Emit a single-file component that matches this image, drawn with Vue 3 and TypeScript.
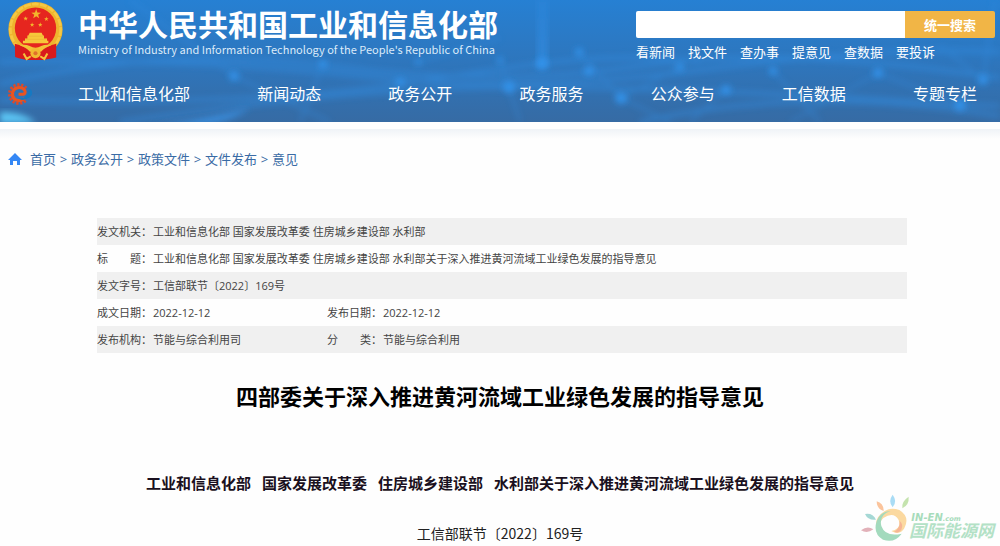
<script setup lang="ts">
interface DocRow {
  label: string
  value: string
  label2?: string
  value2?: string
}

const quickLinks: string[] = ['看新闻', '找文件', '查办事', '提意见', '查数据', '要投诉']
const navItems: string[] = ['工业和信息化部', '新闻动态', '政务公开', '政务服务', '公众参与', '工信数据', '专题专栏']
const crumbs: string[] = ['首页', '政务公开', '政策文件', '文件发布', '意见']
const issuers: string[] = [
  '工业和信息化部',
  '国家发展改革委',
  '住房城乡建设部',
  '水利部关于深入推进黄河流域工业绿色发展的指导意见',
]
const rows: DocRow[] = [
  { label: '发文机关：', value: '工业和信息化部 国家发展改革委 住房城乡建设部 水利部' },
  { label: '标　　题：', value: issuers.join(' ') },
  { label: '发文字号：', value: '工信部联节〔2022〕169号' },
  { label: '成文日期：', value: '2022-12-12', label2: '发布日期：', value2: '2022-12-12' },
  { label: '发布机构：', value: '节能与综合利用司', label2: '分　　类：', value2: '节能与综合利用' },
]

function star(cx: number, cy: number, r: number): string {
  return Array.from({ length: 10 }, (_, i) => {
    const a = (Math.PI / 5) * i - Math.PI / 2
    const d = i % 2 ? r * 0.4 : r
    return `${(cx + d * Math.cos(a)).toFixed(1)},${(cy + d * Math.sin(a)).toFixed(1)}`
  }).join(' ')
}

const stars: string[] = [star(83, 36, 15), star(52, 49, 7), star(71, 67, 7), star(95, 67, 7), star(113, 50, 7)]
const nodes: number[][] = [
  [323, 64, 4], [418, 62, 3], [500, 60, 3], [509, 87, 6], [542, 64, 6], [579, 52, 4], [589, 71, 5], [621, 98, 6],
  [680, 67, 4], [726, 90, 5], [773, 71, 4], [878, 73, 5], [960, 105, 6], [983, 80, 5], [234, 76, 5], [400, 82, 4],
]
const teeth: number[] = Array.from({ length: 12 }, (_, i) => 50 + i * 24)
</script>

<template>
  <div class="page">
    <header class="banner">
      <svg class="backdrop" viewBox="0 0 1000 122" preserveAspectRatio="none" aria-hidden="true">
        <defs>
          <filter id="soft" x="-10%" y="-30%" width="120%" height="160%"><feGaussianBlur stdDeviation="3" /></filter>
          <linearGradient id="beam" x1="0" y1="0" x2="0" y2="1">
            <stop offset="0" stop-color="#3292ec" stop-opacity=".2" />
            <stop offset="1" stop-color="#3292ec" stop-opacity=".6" />
          </linearGradient>
        </defs>
        <g filter="url(#soft)" fill="none" stroke="#3390e6" stroke-width="4" opacity=".5">
          <path d="M0 84Q160 45 330 66T640 66T1000 78" />
          <path d="M0 62Q200 58 360 76T700 70T1000 52" />
          <path d="M120 122Q350 88 510 87T1000 106" />
          <path d="M0 100Q260 108 440 78T700 62" />
          <path d="M640 122Q800 84 1000 116" />
          <path d="M130 0L234 76L330 122M323 64L300 122M418 62L500 38M500 60L509 87L520 122M579 52L621 98L670 122" stroke-width="2" />
          <path d="M680 67L620 98M726 90L690 122M773 71L820 122M878 73L960 105M983 80L940 45M983 80L995 0M878 73L790 122" stroke-width="2" />
        </g>
        <rect x="537" y="0" width="11" height="66" fill="url(#beam)" filter="url(#soft)" />
        <g filter="url(#soft)" fill="#3395ef">
          <circle v-for="(n, i) in nodes" :key="i" :cx="n[0]" :cy="n[1]" :r="n[2]" opacity=".85" />
        </g>
        <path d="M0 112Q24 112 36 123H0Z" fill="#5bc6f5" filter="url(#soft)" />
        <path d="M150 124Q210 120 250 108Q230 122 200 124Z" fill="#3b92e4" filter="url(#soft)" />
      </svg>

      <div class="brand-row">
        <svg class="emblem" viewBox="0 0 162 174" role="img" aria-label="国徽">
          <circle cx="81" cy="80" r="80" fill="#eeb52e" />
          <circle cx="81" cy="80" r="74" fill="none" stroke="#f6c843" stroke-width="8" stroke-dasharray="20 4" />
          <circle cx="81" cy="77" r="61" fill="#e6261f" />
          <polygon v-for="(s, i) in stars" :key="i" :points="s" fill="#f3b62c" />
          <path d="M64 91H99L103 99H106V108H115V114H119V122H44V114H50V108H57V99H60Z" fill="#f6c83a" />
          <path d="M60 101H103M50 110H114" stroke="#ecb235" stroke-width="2" />
          <path d="M20 123Q48 130 64 145Q81 130 98 145Q114 130 142 123V164Q115 170 103 171H59Q44 170 21 162Z" fill="#d91a1c" />
          <path d="M34 128Q50 124 64 130Q81 140 98 130Q112 124 128 128Q105 132 98 146Q81 151 64 146Q56 132 34 128Z" fill="#f4c338" />
          <circle cx="81" cy="151" r="15" fill="#f2b931" />
          <circle cx="81" cy="151" r="6" fill="#e0702a" />
          <path d="M46 152L55 168L67 160M116 152L107 168L95 160" fill="none" stroke="#f5c33c" stroke-width="6" />
        </svg>
        <div class="names">
          <div class="name-zh">中华人民共和国工业和信息化部</div>
          <div class="name-en">Ministry of Industry and Information Technology of the People's Republic of China</div>
        </div>
        <div class="search">
          <form class="search-form" @submit.prevent>
            <input type="text" class="search-input" aria-label="搜索" />
            <button type="submit" class="search-button">统一搜索</button>
          </form>
          <div class="quick">
            <a v-for="q in quickLinks" :key="q" href="#">{{ q }}</a>
          </div>
        </div>
      </div>

      <div class="nav-row">
        <svg class="e-logo" viewBox="0 0 76 66" aria-hidden="true">
          <path v-for="t in teeth" :key="t" d="M60 30h9v7h-9z" :transform="`rotate(${t} 36 33)`" fill="#dc4a2a" />
          <path d="M35 34H50Q58 30 54 22Q46 11 32 14Q17 18 17 34Q18 50 34 53Q46 53 54 46" fill="none" stroke="#ea5420" stroke-width="9" />
          <path d="M18 24Q12 38 22 48" fill="none" stroke="#ea5420" stroke-width="8" />
          <path d="M54 43Q69 34 66 15Q82 25 75 36Q66 49 46 51Q37 50 34 45Q44 47 54 43Z" fill="#1679c2" />
        </svg>
        <nav class="nav">
          <a v-for="n in navItems" :key="n" href="#">{{ n }}</a>
        </nav>
      </div>
    </header>
    <div class="shade"></div>

    <nav class="crumbs" aria-label="当前位置">
      <svg class="home" viewBox="0 0 14 13" aria-hidden="true">
        <path d="M7 0L14 7H12V12H9V8H5V12H2V7H0Z" fill="#3487f5" />
      </svg>
      <template v-for="(c, i) in crumbs" :key="c">
        <span v-if="i > 0" class="sep">&gt;</span>
        <a href="#">{{ c }}</a>
      </template>
    </nav>

    <main class="content">
      <table class="meta">
        <colgroup><col class="col-label" /><col class="col-value" /><col class="col-label" /><col /></colgroup>
        <tbody>
          <tr v-for="r in rows" :key="r.label">
            <th scope="row">{{ r.label }}</th>
            <td :colspan="r.label2 ? 1 : 3">{{ r.value }}</td>
            <template v-if="r.label2">
              <th scope="row">{{ r.label2 }}</th>
              <td>{{ r.value2 }}</td>
            </template>
          </tr>
        </tbody>
      </table>
      <h1>四部委关于深入推进黄河流域工业绿色发展的指导意见</h1>
      <h2><span v-for="s in issuers" :key="s">{{ s }}</span></h2>
      <p class="number">工信部联节〔2022〕169号</p>
    </main>

    <svg class="watermark" viewBox="0 0 411 144" role="img" aria-label="国际能源网">
      <path d="M3 109Q22 94 40 106Q22 120 3 109Z" fill="#e2b1b9" />
      <path d="M15 60Q38 56 48 77Q24 80 15 60Z" fill="#a5d8d5" />
      <path d="M50 22Q71 28 71 51Q50 45 50 22Z" fill="#fbc49c" />
      <path d="M98 2Q113 22 98 40Q83 22 98 2Z" fill="#a9dcf5" />
      <path d="M146 8Q148 33 127 43Q124 22 146 8Z" fill="#c4e3ae" />
      <path d="M54 70Q80 34 118 48Q151 68 133 103Q119 126 94 111Q125 106 116 78Q101 51 70 72Q53 88 60 112Q40 92 54 70Z" fill="#fbd9a0" />
      <path d="M102 113Q121 104 119 81Q131 91 124 107Q115 120 102 113Z" fill="#f6b595" />
      <path d="M92 51Q56 62 64 96Q76 130 125 119Q103 149 69 137Q38 119 50 82Q61 52 92 51Z" fill="#a3dabd" />
      <text x="154" y="82" class="wm-en">IN-EN<tspan class="wm-com">.com</tspan></text>
      <text x="147" y="130" class="wm-zh">国际能源网</text>
    </svg>
  </div>
</template>

<style>
body {
  margin: 0;
  background: #fefefe;
}
</style>

<style scoped>
.page {
  position: relative;
  min-height: 100vh;
  overflow: hidden;
  font-family: "Open Sans", "Noto Sans CJK SC", sans-serif;
}
a {
  color: inherit;
  text-decoration: none;
  white-space: nowrap;
}
.banner {
  position: relative;
  background: linear-gradient(#2680d3, #2e76bd 50%, #366ba4);
  color: #fff;
}
.backdrop {
  position: absolute;
  inset: 0;
  width: 100%;
  height: 100%;
}
.brand-row {
  position: relative;
  display: flex;
  align-items: flex-start;
  padding: 2px 5px 1px 8px;
}
.emblem {
  flex: none;
  width: 55px;
  height: 59px;
}
.names {
  flex: 1;
  margin-left: 15px;
  padding-top: 3px;
  white-space: nowrap;
  font-family: "Noto Sans CJK SC", sans-serif;
}
.name-zh {
  font-size: 30px;
  line-height: 36px;
  font-weight: 700;
}
.name-en {
  font-size: 11px;
  line-height: 16px;
  color: #dcebfa;
}
.search {
  width: 359px;
  padding-top: 9px;
}
.search-form {
  display: flex;
  height: 27px;
}
.search-input {
  flex: 1;
  min-width: 0;
  padding: 0 8px;
  border: 0;
  border-radius: 2px 0 0 2px;
  background: #fff;
  font: inherit;
  font-size: 13px;
}
.search-button {
  flex: none;
  width: 25%;
  padding: 0;
  border: 0;
  border-radius: 0 2px 2px 0;
  background: #f1b546;
  color: #fff;
  font: inherit;
  font-size: 13px;
  font-weight: 700;
}
.quick {
  display: flex;
  gap: 13px;
  margin-top: 4px;
  font-size: 13px;
  line-height: 20px;
}
.nav-row {
  position: relative;
  display: flex;
  align-items: center;
  height: 56px;
  padding: 3px 23px 0 7px;
}
.e-logo {
  flex: none;
  width: 25px;
  height: 22px;
}
.nav {
  flex: 1;
  display: flex;
  justify-content: space-between;
  margin-left: 46px;
  font-size: 16px;
  line-height: 24px;
}
.shade {
  height: 10px;
  margin-top: 7px;
  background: linear-gradient(#eff3f7, #fefefe);
}
.crumbs {
  display: flex;
  align-items: center;
  margin-top: 10px;
  padding-left: 8px;
  font-size: 13px;
  line-height: 20px;
  color: #3a6ba5;
}
.home {
  width: 14px;
  height: 13px;
  margin-right: 8px;
}
.sep {
  width: 15px;
  text-align: center;
}
.content {
  margin-top: 49px;
}
.meta {
  width: 81%;
  margin-left: 97px;
  border-collapse: collapse;
  table-layout: fixed;
  font-size: 11px;
  line-height: 27px;
  color: #444;
}
.meta th,
.meta td {
  height: 27px;
  padding: 0;
  font-weight: 400;
  text-align: left;
  white-space: nowrap;
}
.meta tr:nth-child(odd) {
  background: #f0f0f0;
}
.col-label {
  width: 56px;
}
.col-value {
  width: 174px;
}
h1 {
  margin: 26px 0 0;
  text-align: center;
  font-size: 22px;
  line-height: 34px;
  font-weight: 700;
  color: #000;
}
h2 {
  display: flex;
  justify-content: center;
  gap: 11px;
  margin: 58px 0 0;
  font-size: 15px;
  line-height: 24px;
  font-weight: 700;
  color: #1a1020;
}
.number {
  margin: 27px 0 0;
  text-align: center;
  font-family: "Noto Sans CJK SC", sans-serif;
  font-size: 14px;
  line-height: 22px;
  color: #222;
}
.watermark {
  position: absolute;
  right: 3px;
  top: 494px;
  width: 137px;
  height: 48px;
}
.wm-en {
  font: italic 700 30px "DejaVu Sans", sans-serif;
  fill: #a7dcbb;
}
.wm-com {
  font-size: 20px;
}
.wm-zh {
  font: italic 700 51px "Noto Sans CJK SC", sans-serif;
  fill: #b3e1c6;
}
</style>
